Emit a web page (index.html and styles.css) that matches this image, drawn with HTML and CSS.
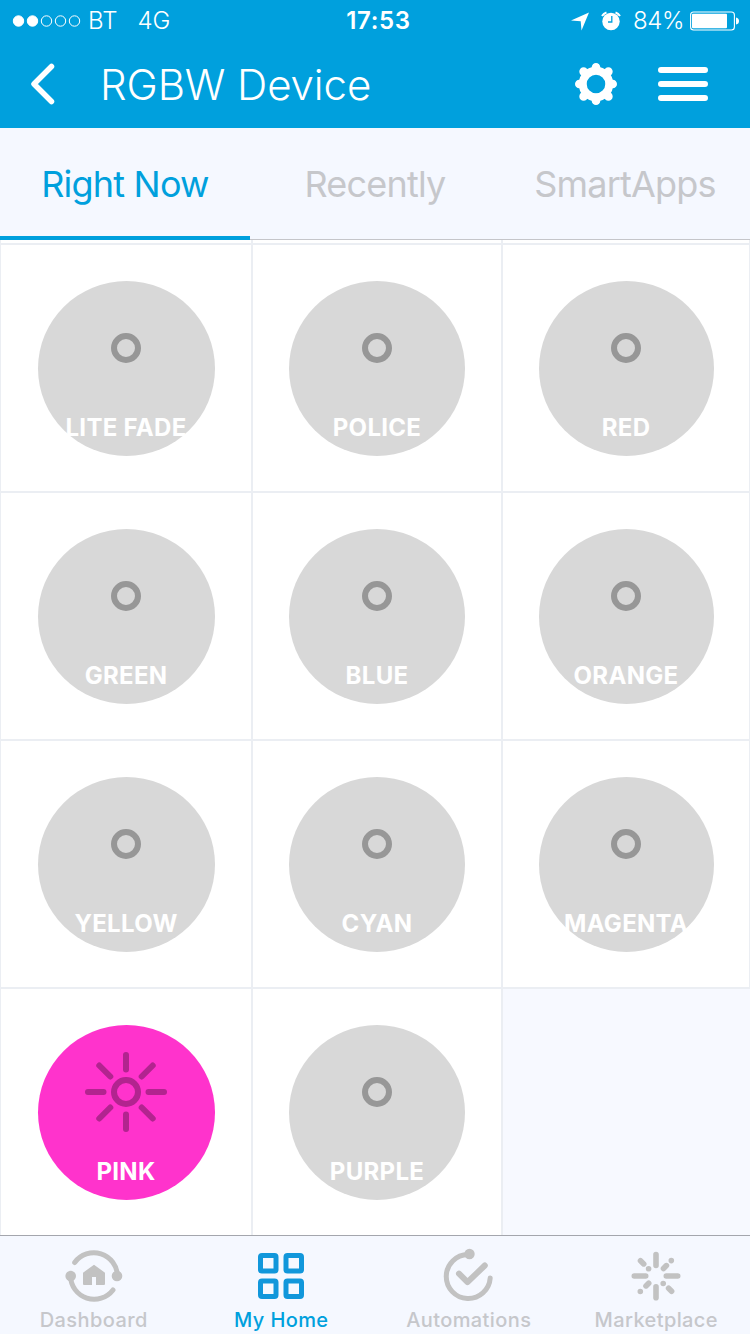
FILE: index.html
```html
<!DOCTYPE html>
<html lang="en">
<head>
<meta charset="utf-8">
<title>RGBW Device</title>
<link rel="stylesheet" href="styles.css">
</head>
<body>
<svg class="defs" aria-hidden="true">
  <symbol id="off" viewBox="0 0 90 90"><circle cx="45" cy="45" r="12" fill="none" stroke="#979797" stroke-width="6"/></symbol>
  <symbol id="sun" viewBox="0 0 90 90"><g fill="none" stroke="#b2248f" stroke-width="6" stroke-linecap="round"><circle cx="45" cy="45" r="12"/><path d="M45 8v14.5M45 67.500v14.500M7 45h15.500M67.500 45h15.500M18.300 18.500l11 11M60.700 29.500l11-11M18.300 71.500l11-11M60.700 60.500l11 11"/></g></symbol>
</svg>
<div class="screen">
  <div class="status">
    <div class="status-left">
      <svg class="signal" width="70" height="14" viewBox="0 0 70 14"><g stroke="#fff" stroke-width="1"><circle cx="6.500" cy="7" r="5.200" fill="#fff"/><circle cx="20.500" cy="7" r="5.200" fill="#fff"/><g fill="none"><circle cx="34.500" cy="7" r="5.200"/><circle cx="48.500" cy="7" r="5.200"/><circle cx="62.500" cy="7" r="5.200"/></g></g></svg>
      <span class="carrier">BT</span><span class="network">4G</span>
    </div>
    <span class="time">17:53</span>
    <div class="status-right">
      <svg width="18" height="19" viewBox="0 0 18 19"><path d="M18 .5L10.500 18.500 9.700 9.300 0 8.500z" fill="#fff"/></svg>
      <svg class="alarm" width="20" height="20" viewBox="0 0 20 20"><circle cx="10" cy="10.500" r="8.700" fill="#fff"/><path d="M1 5A9 9 0 0 1 5.500 1.500M19 5A9 9 0 0 0 14.500 1.500" fill="none" stroke="#fff" stroke-width="2"/><path d="M10.800 5v6H7" fill="none" stroke="#00a0dd" stroke-width="1.300"/></svg>
      <span class="percent">84%</span>
      <svg class="battery" width="50" height="20" viewBox="0 0 50 20"><rect x=".6" y="1" width="43.800" height="18" rx="3" fill="none" stroke="#fff" stroke-width="1.100"/><rect x="2" y="2.700" width="35" height="14.600" rx="1" fill="#fff"/><path d="M46 6.500q3 .5 3 3.500t-3 3.500z" fill="#fff"/></svg>
    </div>
  </div>
  <header class="header">
    <svg class="back" width="26" height="44" viewBox="0 0 26 44"><path d="M21.500 4.500L4 22l17.500 17.500" fill="none" stroke="#fff" stroke-width="5.500" stroke-linecap="round" stroke-linejoin="round"/></svg>
    <h1 class="title">RGBW Device</h1>
    <svg class="gear" width="44" height="44" viewBox="-22 -22 44 44"><g fill="none" stroke="#fff" stroke-linecap="round"><circle r="13.300" stroke-width="8"/><path stroke-width="8.600" d="M0-14v-2.700M0 14v2.700M-14 0h-2.700M14 0h2.700M10.500-10.500l1.900-1.900M-10.500-10.500l-1.900-1.900M10.500 10.500l1.900 1.900M-10.500 10.500l-1.900 1.900"/></g></svg>
    <svg class="menu" width="50" height="36" viewBox="0 0 50 36"><path d="M3 4h44M3 18h44M3 32h44" stroke="#fff" stroke-width="6" stroke-linecap="round"/></svg>
  </header>
  <nav class="tabs">
    <div class="tab active"><span>Right Now</span></div>
    <div class="tab"><span>Recently</span></div>
    <div class="tab"><span>SmartApps</span></div>
  </nav>
  <main class="grid">
    <div class="tile"></div><div class="tile"></div><div class="tile"></div>
    <div class="tile"><div class="disc"><svg class="bulb"><use href="#off"/></svg><span class="label">LITE FADE</span></div></div>
    <div class="tile"><div class="disc"><svg class="bulb"><use href="#off"/></svg><span class="label">POLICE</span></div></div>
    <div class="tile"><div class="disc"><svg class="bulb"><use href="#off"/></svg><span class="label">RED</span></div></div>
    <div class="tile"><div class="disc"><svg class="bulb"><use href="#off"/></svg><span class="label">GREEN</span></div></div>
    <div class="tile"><div class="disc"><svg class="bulb"><use href="#off"/></svg><span class="label">BLUE</span></div></div>
    <div class="tile"><div class="disc"><svg class="bulb"><use href="#off"/></svg><span class="label">ORANGE</span></div></div>
    <div class="tile"><div class="disc"><svg class="bulb"><use href="#off"/></svg><span class="label">YELLOW</span></div></div>
    <div class="tile"><div class="disc"><svg class="bulb"><use href="#off"/></svg><span class="label">CYAN</span></div></div>
    <div class="tile"><div class="disc"><svg class="bulb"><use href="#off"/></svg><span class="label">MAGENTA</span></div></div>
    <div class="tile"><div class="disc pink"><svg class="bulb"><use href="#sun"/></svg><span class="label">PINK</span></div></div>
    <div class="tile"><div class="disc"><svg class="bulb"><use href="#off"/></svg><span class="label">PURPLE</span></div></div>
    <div class="empty"></div>
  </main>
  <nav class="bottom">
    <div class="item">
      <svg width="60" height="60" viewBox="64 1246 60 60"><g fill="none" stroke="#c2c2c2" stroke-width="5" stroke-linecap="round"><path d="M74.700 1262.500A23.700 23.700 0 0 1 117.500 1276M113 1290A23.700 23.700 0 0 1 70.500 1276"/></g><g fill="#c2c2c2"><circle cx="117" cy="1276" r="5.300"/><circle cx="70.700" cy="1276" r="5.300"/><path d="M94 1264.700l11 8v11.300q0 1-1 1h-8v-8h-4v8h-8q-1 0-1-1v-11.300z"/></g></svg>
      <span>Dashboard</span>
    </div>
    <div class="item current">
      <svg width="60" height="60" viewBox="251 1246 60 60"><path fill="#1197db" fill-rule="evenodd" d="M262 1253h12.500q4 0 4 4v12.500q0 4-4 4H262q-4 0-4-4V1257q0-4 4-4zM263 1258v10.500h10.500V1258zM287.500 1253H300q4 0 4 4v12.500q0 4-4 4h-12.500q-4 0-4-4V1257q0-4 4-4zM288.500 1258v10.500H299V1258zM262 1278.500h12.500q4 0 4 4V1295q0 4-4 4H262q-4 0-4-4v-12.500q0-4 4-4zM263 1283.500V1294h10.500v-10.500zM287.500 1278.500H300q4 0 4 4V1295q0 4-4 4h-12.500q-4 0-4-4v-12.500q0-4 4-4zM288.500 1283.500V1294H299v-10.500z"/></svg>
      <span>My Home</span>
    </div>
    <div class="item">
      <svg width="60" height="60" viewBox="439 1246 60 60"><g fill="none" stroke="#c2c2c2" stroke-linecap="round" stroke-linejoin="round"><path stroke-width="5" d="M468 1254.500A22 22 0 1 0 490.200 1278"/><path stroke-width="6" d="M459 1273.700l8.500 8.500 17.300-16.700"/></g><circle cx="469.500" cy="1254" r="5.200" fill="#c2c2c2"/></svg>
      <span>Automations</span>
    </div>
    <div class="item">
      <svg width="60" height="60" viewBox="626 1246 60 60"><path fill="none" stroke="#c2c2c2" stroke-width="5.600" stroke-linecap="round" d="M656 1254.500v11M656 1286.700v11M634.300 1276h11.400M666.300 1276h11.400M640.500 1260.700l3.200 3.200M648.600 1268.800h.01M671.300 1260.600h.01M663.500 1268.500l2.900-2.900M648.700 1283.200l-2.700 2.700M640.300 1291.500h.01M663.200 1283.500h.01M668.600 1288.300l3 3"/></svg>
      <span>Marketplace</span>
    </div>
  </nav>
</div>
</body>
</html>
```
FILE: styles.css
```css
* { box-sizing: border-box; }
body { margin: 0; font-family: Inter, "Liberation Sans", sans-serif; }
svg { display: block; flex: none; }
.defs { display: none; }
.screen { width: 750px; height: 1334px; display: flex; flex-direction: column; overflow: hidden; background: #f7f9ff; }

.status { height: 40px; padding-top: 1px; display: grid; grid-template-columns: 1fr auto 1fr; align-items: center; background: #00a0dd; color: #fff; font-size: 24px; font-weight: 350; line-height: 40px; }
.status-left, .status-right { display: flex; align-items: center; }
.status-left { padding-left: 12px; }
.carrier { margin-left: 6px; }
.network { margin-left: 20px; }
.time { padding-left: 7px; font-weight: 600; letter-spacing: 0.7px; }
.status-right { justify-content: flex-end; padding-right: 10px; }
.alarm { margin-left: 12px; }
.percent { margin-left: 12px; letter-spacing: -0.4px; }
.battery { margin-left: 6px; }

.header { height: 88px; display: flex; align-items: center; padding: 0 42px 0 30px; background: #00a0dd; color: #fff; }
.title { flex: 1; margin: 0 0 0 44px; padding-top: 1px; font-size: 42px; font-weight: 340; line-height: 88px; letter-spacing: -0.1px; }
.menu { margin-left: 40px; }

.tabs { height: 112px; display: grid; grid-template-columns: repeat(3, 1fr); background: #f5f8ff; }
.tab { display: flex; align-items: center; justify-content: center; border-bottom: 1px solid #c5c6ca; color: #c6c7cb; font-size: 36px; font-weight: 380; letter-spacing: -0.8px; padding-top: 1px; }
.tab.active { border-bottom: 4px solid #00a0dd; color: #00a0dd; padding-top: 4px; }

.grid { height: 995px; display: grid; grid-template-columns: 252px 250px 248px; grid-template-rows: 4px repeat(4, 248px); overflow: hidden; }
.tile { background: #fff; border: 1px solid #ebeef3; display: flex; justify-content: center; }
.tile:nth-child(-n+3) { border-top: 0; }
.empty { border: 1px solid #ebeef3; border-width: 1px 0 0 1px; }
.disc { width: 177px; height: 175px; margin-top: 36px; border-radius: 50%; background: #d8d8d8; display: flex; flex-direction: column; align-items: center; }
.tile:nth-child(3n+2) .disc { width: 176px; }
.tile:nth-child(3n) .disc { width: 175px; }
.disc.pink { background: #ff33cc; }
.bulb { width: 90px; height: 90px; margin-top: 22px; }
.label { margin-top: 20px; color: #fff; font-size: 24px; font-weight: 660; line-height: 30px; letter-spacing: 0.3px; white-space: nowrap; }

.bottom { height: 99px; display: grid; grid-template-columns: repeat(4, 1fr); border-top: 1px solid #a4a6ad; background: #f5f8ff; }
.item { display: flex; flex-direction: column; align-items: center; padding-top: 10px; color: #c6c7cb; font-size: 20px; font-weight: 450; line-height: 28px; letter-spacing: 0.4px; }
.item.current { color: #00a0dd; }
```
